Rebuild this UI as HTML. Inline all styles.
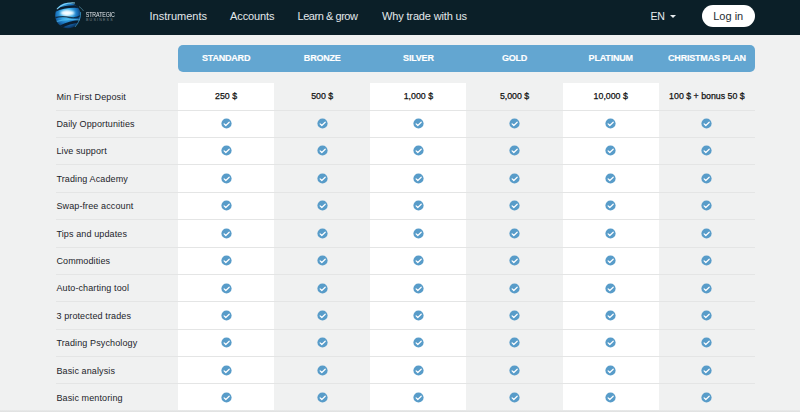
<!DOCTYPE html>
<html><head><meta charset="utf-8"><style>
*{margin:0;padding:0;box-sizing:border-box}
html,body{width:800px;height:412px;overflow:hidden;background:#f0f1f1;font-family:"Liberation Sans",sans-serif}
.a{position:absolute}
.hdr{left:0;top:0;width:800px;height:35px;background:#0b1f28}
.nav{top:10px;color:#e3e8eb;font-size:11px;line-height:12px;white-space:nowrap}
.login{left:701.5px;top:5px;width:53.5px;height:22px;border-radius:11px;background:#fff;color:#262e33;font-size:11px;line-height:22px;text-align:center}
.en{left:650.5px;top:10px;color:#e8ecef;font-size:10.6px;letter-spacing:-0.25px;line-height:12px}
.caret{left:669.5px;top:15px;width:0;height:0;border-left:3px solid transparent;border-right:3px solid transparent;border-top:3.5px solid #e8ecef}
.band{left:178px;top:44.5px;width:577px;height:27.0px;background:#63a6d1;border-radius:5px}
.th{top:44.5px;height:27.0px;line-height:27.0px;padding-top:0.6px;color:#fff;font-size:9px;font-weight:bold;letter-spacing:-0.2px;-webkit-text-stroke:0.15px #fff;text-align:center;width:96.167px;white-space:nowrap}
.col{top:82.5px;height:329.5px;width:96.167px;background:#fff}
.row{left:56px;width:699px;height:1px;background:#e4e5e5}
.lbl{left:56.4px;font-size:9px;color:#1c242a;line-height:12px;letter-spacing:0.12px;white-space:nowrap}
.val{font-size:8.8px;color:#111;width:96.167px;text-align:center;line-height:12px;-webkit-text-stroke:0.25px #111;white-space:nowrap}
.chk{width:11px;height:11px}
</style></head><body>
<div class="a hdr"></div>
<svg class="a" style="left:52px;top:0px" width="36" height="34" viewBox="0 0 36 34">
<defs><radialGradient id="g" cx="45%" cy="42%" r="58%"><stop offset="0" stop-color="#bdeeff"/><stop offset="0.35" stop-color="#3fb2ec"/><stop offset="0.7" stop-color="#1a74bf"/><stop offset="1" stop-color="#0a3564"/></radialGradient>
<filter id="bl" x="-50%" y="-50%" width="200%" height="200%"><feGaussianBlur stdDeviation="1.2"/></filter>
<clipPath id="cp"><circle cx="16" cy="15.5" r="12.8"/></clipPath></defs>
<circle cx="16" cy="15.5" r="12.8" fill="url(#g)"/>
<g clip-path="url(#cp)">
<ellipse cx="15.5" cy="13" rx="7" ry="2.6" fill="#ffffff" filter="url(#bl)" opacity="0.95"/>
<g fill="none" stroke="#0a1d30" stroke-linecap="round">
<path d="M2 11 Q14 5 30 7" stroke-width="2.6"/>
<path d="M2 18 Q10 15.5 18 17.5 Q24 19 30 15" stroke-width="1.3" opacity="0.8"/>
<path d="M8 27 Q18 22 31 21" stroke-width="2.6"/>
</g>
<path d="M3 22 Q13 18 28 20" stroke="#5cc8f5" stroke-width="1.2" fill="none" opacity="0.6"/>
</g>
<path d="M5 9 Q12 2 23 3" stroke="#8fe0ff" stroke-width="1.1" fill="none" opacity="0.85"/>
<path d="M27 6.5 Q30 8.5 31.5 11" stroke="#6fb9d8" stroke-width="0.8" fill="none" opacity="0.6"/>
<path d="M28.6 12 Q29 20 23 27" stroke="#4fc0ee" stroke-width="0.9" fill="none" opacity="0.6"/>
</svg>
<div class="a" style="left:85.8px;top:10.9px;font-size:5.3px;line-height:6px;color:#e2e6ea;letter-spacing:-0.1px;transform:scaleY(1.28);transform-origin:0 0">STRATEGIC</div>
<div class="a" style="left:86px;top:18px;font-size:3.6px;line-height:4px;color:#7d868d;letter-spacing:1.2px">BUSINESS</div>
<div class="a nav" style="left:149.5px;letter-spacing:0px">Instruments</div>
<div class="a nav" style="left:230px;letter-spacing:-0.1px">Accounts</div>
<div class="a nav" style="left:297.5px;letter-spacing:-0.45px">Learn &amp; grow</div>
<div class="a nav" style="left:382px;letter-spacing:-0.15px">Why trade with us</div>
<div class="a en">EN</div><div class="a caret"></div>
<div class="a login">Log in</div>
<div class="a band"></div>
<div class="a col" style="left:178.000px"></div>
<div class="a col" style="left:370.333px"></div>
<div class="a col" style="left:562.667px"></div>
<div class="a th" style="left:178.000px">STANDARD</div>
<div class="a th" style="left:274.167px">BRONZE</div>
<div class="a th" style="left:370.333px">SILVER</div>
<div class="a th" style="left:466.500px">GOLD</div>
<div class="a th" style="left:562.667px">PLATINUM</div>
<div class="a th" style="left:658.833px">CHRISTMAS PLAN</div>
<div class="a lbl" style="top:90.54px">Min First Deposit</div>
<div class="a val" style="left:178.000px;top:90.34px">250 $</div>
<div class="a val" style="left:274.167px;top:90.34px">500 $</div>
<div class="a val" style="left:370.333px;top:90.34px">1,000 $</div>
<div class="a val" style="left:466.500px;top:90.34px">5,000 $</div>
<div class="a val" style="left:562.667px;top:90.34px">10,000 $</div>
<div class="a val" style="left:658.833px;top:90.34px">100 $ + bonus 50 $</div>
<div class="a row" style="top:109.60px"></div>
<div class="a lbl" style="top:117.95px">Daily Opportunities</div>
<svg class="a chk" style="left:220.58px;top:117.88px" viewBox="0 0 11 11"><circle cx="5.5" cy="5.5" r="5.1" fill="#589cc9"/><path d="M3.1 5.9 L4.8 7.5 L8.2 4.2" stroke="#fff" stroke-width="1.2" fill="none" stroke-linecap="round" stroke-linejoin="round"/></svg>
<svg class="a chk" style="left:316.75px;top:117.88px" viewBox="0 0 11 11"><circle cx="5.5" cy="5.5" r="5.1" fill="#589cc9"/><path d="M3.1 5.9 L4.8 7.5 L8.2 4.2" stroke="#fff" stroke-width="1.2" fill="none" stroke-linecap="round" stroke-linejoin="round"/></svg>
<svg class="a chk" style="left:412.92px;top:117.88px" viewBox="0 0 11 11"><circle cx="5.5" cy="5.5" r="5.1" fill="#589cc9"/><path d="M3.1 5.9 L4.8 7.5 L8.2 4.2" stroke="#fff" stroke-width="1.2" fill="none" stroke-linecap="round" stroke-linejoin="round"/></svg>
<svg class="a chk" style="left:509.08px;top:117.88px" viewBox="0 0 11 11"><circle cx="5.5" cy="5.5" r="5.1" fill="#589cc9"/><path d="M3.1 5.9 L4.8 7.5 L8.2 4.2" stroke="#fff" stroke-width="1.2" fill="none" stroke-linecap="round" stroke-linejoin="round"/></svg>
<svg class="a chk" style="left:605.25px;top:117.88px" viewBox="0 0 11 11"><circle cx="5.5" cy="5.5" r="5.1" fill="#589cc9"/><path d="M3.1 5.9 L4.8 7.5 L8.2 4.2" stroke="#fff" stroke-width="1.2" fill="none" stroke-linecap="round" stroke-linejoin="round"/></svg>
<svg class="a chk" style="left:701.42px;top:117.88px" viewBox="0 0 11 11"><circle cx="5.5" cy="5.5" r="5.1" fill="#589cc9"/><path d="M3.1 5.9 L4.8 7.5 L8.2 4.2" stroke="#fff" stroke-width="1.2" fill="none" stroke-linecap="round" stroke-linejoin="round"/></svg>
<div class="a row" style="top:136.98px"></div>
<div class="a lbl" style="top:145.37px">Live support</div>
<svg class="a chk" style="left:220.58px;top:145.32px" viewBox="0 0 11 11"><circle cx="5.5" cy="5.5" r="5.1" fill="#589cc9"/><path d="M3.1 5.9 L4.8 7.5 L8.2 4.2" stroke="#fff" stroke-width="1.2" fill="none" stroke-linecap="round" stroke-linejoin="round"/></svg>
<svg class="a chk" style="left:316.75px;top:145.32px" viewBox="0 0 11 11"><circle cx="5.5" cy="5.5" r="5.1" fill="#589cc9"/><path d="M3.1 5.9 L4.8 7.5 L8.2 4.2" stroke="#fff" stroke-width="1.2" fill="none" stroke-linecap="round" stroke-linejoin="round"/></svg>
<svg class="a chk" style="left:412.92px;top:145.32px" viewBox="0 0 11 11"><circle cx="5.5" cy="5.5" r="5.1" fill="#589cc9"/><path d="M3.1 5.9 L4.8 7.5 L8.2 4.2" stroke="#fff" stroke-width="1.2" fill="none" stroke-linecap="round" stroke-linejoin="round"/></svg>
<svg class="a chk" style="left:509.08px;top:145.32px" viewBox="0 0 11 11"><circle cx="5.5" cy="5.5" r="5.1" fill="#589cc9"/><path d="M3.1 5.9 L4.8 7.5 L8.2 4.2" stroke="#fff" stroke-width="1.2" fill="none" stroke-linecap="round" stroke-linejoin="round"/></svg>
<svg class="a chk" style="left:605.25px;top:145.32px" viewBox="0 0 11 11"><circle cx="5.5" cy="5.5" r="5.1" fill="#589cc9"/><path d="M3.1 5.9 L4.8 7.5 L8.2 4.2" stroke="#fff" stroke-width="1.2" fill="none" stroke-linecap="round" stroke-linejoin="round"/></svg>
<svg class="a chk" style="left:701.42px;top:145.32px" viewBox="0 0 11 11"><circle cx="5.5" cy="5.5" r="5.1" fill="#589cc9"/><path d="M3.1 5.9 L4.8 7.5 L8.2 4.2" stroke="#fff" stroke-width="1.2" fill="none" stroke-linecap="round" stroke-linejoin="round"/></svg>
<div class="a row" style="top:164.36px"></div>
<div class="a lbl" style="top:172.78px">Trading Academy</div>
<svg class="a chk" style="left:220.58px;top:172.76px" viewBox="0 0 11 11"><circle cx="5.5" cy="5.5" r="5.1" fill="#589cc9"/><path d="M3.1 5.9 L4.8 7.5 L8.2 4.2" stroke="#fff" stroke-width="1.2" fill="none" stroke-linecap="round" stroke-linejoin="round"/></svg>
<svg class="a chk" style="left:316.75px;top:172.76px" viewBox="0 0 11 11"><circle cx="5.5" cy="5.5" r="5.1" fill="#589cc9"/><path d="M3.1 5.9 L4.8 7.5 L8.2 4.2" stroke="#fff" stroke-width="1.2" fill="none" stroke-linecap="round" stroke-linejoin="round"/></svg>
<svg class="a chk" style="left:412.92px;top:172.76px" viewBox="0 0 11 11"><circle cx="5.5" cy="5.5" r="5.1" fill="#589cc9"/><path d="M3.1 5.9 L4.8 7.5 L8.2 4.2" stroke="#fff" stroke-width="1.2" fill="none" stroke-linecap="round" stroke-linejoin="round"/></svg>
<svg class="a chk" style="left:509.08px;top:172.76px" viewBox="0 0 11 11"><circle cx="5.5" cy="5.5" r="5.1" fill="#589cc9"/><path d="M3.1 5.9 L4.8 7.5 L8.2 4.2" stroke="#fff" stroke-width="1.2" fill="none" stroke-linecap="round" stroke-linejoin="round"/></svg>
<svg class="a chk" style="left:605.25px;top:172.76px" viewBox="0 0 11 11"><circle cx="5.5" cy="5.5" r="5.1" fill="#589cc9"/><path d="M3.1 5.9 L4.8 7.5 L8.2 4.2" stroke="#fff" stroke-width="1.2" fill="none" stroke-linecap="round" stroke-linejoin="round"/></svg>
<svg class="a chk" style="left:701.42px;top:172.76px" viewBox="0 0 11 11"><circle cx="5.5" cy="5.5" r="5.1" fill="#589cc9"/><path d="M3.1 5.9 L4.8 7.5 L8.2 4.2" stroke="#fff" stroke-width="1.2" fill="none" stroke-linecap="round" stroke-linejoin="round"/></svg>
<div class="a row" style="top:191.74px"></div>
<div class="a lbl" style="top:200.20px">Swap-free account</div>
<svg class="a chk" style="left:220.58px;top:200.20px" viewBox="0 0 11 11"><circle cx="5.5" cy="5.5" r="5.1" fill="#589cc9"/><path d="M3.1 5.9 L4.8 7.5 L8.2 4.2" stroke="#fff" stroke-width="1.2" fill="none" stroke-linecap="round" stroke-linejoin="round"/></svg>
<svg class="a chk" style="left:316.75px;top:200.20px" viewBox="0 0 11 11"><circle cx="5.5" cy="5.5" r="5.1" fill="#589cc9"/><path d="M3.1 5.9 L4.8 7.5 L8.2 4.2" stroke="#fff" stroke-width="1.2" fill="none" stroke-linecap="round" stroke-linejoin="round"/></svg>
<svg class="a chk" style="left:412.92px;top:200.20px" viewBox="0 0 11 11"><circle cx="5.5" cy="5.5" r="5.1" fill="#589cc9"/><path d="M3.1 5.9 L4.8 7.5 L8.2 4.2" stroke="#fff" stroke-width="1.2" fill="none" stroke-linecap="round" stroke-linejoin="round"/></svg>
<svg class="a chk" style="left:509.08px;top:200.20px" viewBox="0 0 11 11"><circle cx="5.5" cy="5.5" r="5.1" fill="#589cc9"/><path d="M3.1 5.9 L4.8 7.5 L8.2 4.2" stroke="#fff" stroke-width="1.2" fill="none" stroke-linecap="round" stroke-linejoin="round"/></svg>
<svg class="a chk" style="left:605.25px;top:200.20px" viewBox="0 0 11 11"><circle cx="5.5" cy="5.5" r="5.1" fill="#589cc9"/><path d="M3.1 5.9 L4.8 7.5 L8.2 4.2" stroke="#fff" stroke-width="1.2" fill="none" stroke-linecap="round" stroke-linejoin="round"/></svg>
<svg class="a chk" style="left:701.42px;top:200.20px" viewBox="0 0 11 11"><circle cx="5.5" cy="5.5" r="5.1" fill="#589cc9"/><path d="M3.1 5.9 L4.8 7.5 L8.2 4.2" stroke="#fff" stroke-width="1.2" fill="none" stroke-linecap="round" stroke-linejoin="round"/></svg>
<div class="a row" style="top:219.12px"></div>
<div class="a lbl" style="top:227.62px">Tips and updates</div>
<svg class="a chk" style="left:220.58px;top:227.64px" viewBox="0 0 11 11"><circle cx="5.5" cy="5.5" r="5.1" fill="#589cc9"/><path d="M3.1 5.9 L4.8 7.5 L8.2 4.2" stroke="#fff" stroke-width="1.2" fill="none" stroke-linecap="round" stroke-linejoin="round"/></svg>
<svg class="a chk" style="left:316.75px;top:227.64px" viewBox="0 0 11 11"><circle cx="5.5" cy="5.5" r="5.1" fill="#589cc9"/><path d="M3.1 5.9 L4.8 7.5 L8.2 4.2" stroke="#fff" stroke-width="1.2" fill="none" stroke-linecap="round" stroke-linejoin="round"/></svg>
<svg class="a chk" style="left:412.92px;top:227.64px" viewBox="0 0 11 11"><circle cx="5.5" cy="5.5" r="5.1" fill="#589cc9"/><path d="M3.1 5.9 L4.8 7.5 L8.2 4.2" stroke="#fff" stroke-width="1.2" fill="none" stroke-linecap="round" stroke-linejoin="round"/></svg>
<svg class="a chk" style="left:509.08px;top:227.64px" viewBox="0 0 11 11"><circle cx="5.5" cy="5.5" r="5.1" fill="#589cc9"/><path d="M3.1 5.9 L4.8 7.5 L8.2 4.2" stroke="#fff" stroke-width="1.2" fill="none" stroke-linecap="round" stroke-linejoin="round"/></svg>
<svg class="a chk" style="left:605.25px;top:227.64px" viewBox="0 0 11 11"><circle cx="5.5" cy="5.5" r="5.1" fill="#589cc9"/><path d="M3.1 5.9 L4.8 7.5 L8.2 4.2" stroke="#fff" stroke-width="1.2" fill="none" stroke-linecap="round" stroke-linejoin="round"/></svg>
<svg class="a chk" style="left:701.42px;top:227.64px" viewBox="0 0 11 11"><circle cx="5.5" cy="5.5" r="5.1" fill="#589cc9"/><path d="M3.1 5.9 L4.8 7.5 L8.2 4.2" stroke="#fff" stroke-width="1.2" fill="none" stroke-linecap="round" stroke-linejoin="round"/></svg>
<div class="a row" style="top:246.50px"></div>
<div class="a lbl" style="top:255.03px">Commodities</div>
<svg class="a chk" style="left:220.58px;top:255.08px" viewBox="0 0 11 11"><circle cx="5.5" cy="5.5" r="5.1" fill="#589cc9"/><path d="M3.1 5.9 L4.8 7.5 L8.2 4.2" stroke="#fff" stroke-width="1.2" fill="none" stroke-linecap="round" stroke-linejoin="round"/></svg>
<svg class="a chk" style="left:316.75px;top:255.08px" viewBox="0 0 11 11"><circle cx="5.5" cy="5.5" r="5.1" fill="#589cc9"/><path d="M3.1 5.9 L4.8 7.5 L8.2 4.2" stroke="#fff" stroke-width="1.2" fill="none" stroke-linecap="round" stroke-linejoin="round"/></svg>
<svg class="a chk" style="left:412.92px;top:255.08px" viewBox="0 0 11 11"><circle cx="5.5" cy="5.5" r="5.1" fill="#589cc9"/><path d="M3.1 5.9 L4.8 7.5 L8.2 4.2" stroke="#fff" stroke-width="1.2" fill="none" stroke-linecap="round" stroke-linejoin="round"/></svg>
<svg class="a chk" style="left:509.08px;top:255.08px" viewBox="0 0 11 11"><circle cx="5.5" cy="5.5" r="5.1" fill="#589cc9"/><path d="M3.1 5.9 L4.8 7.5 L8.2 4.2" stroke="#fff" stroke-width="1.2" fill="none" stroke-linecap="round" stroke-linejoin="round"/></svg>
<svg class="a chk" style="left:605.25px;top:255.08px" viewBox="0 0 11 11"><circle cx="5.5" cy="5.5" r="5.1" fill="#589cc9"/><path d="M3.1 5.9 L4.8 7.5 L8.2 4.2" stroke="#fff" stroke-width="1.2" fill="none" stroke-linecap="round" stroke-linejoin="round"/></svg>
<svg class="a chk" style="left:701.42px;top:255.08px" viewBox="0 0 11 11"><circle cx="5.5" cy="5.5" r="5.1" fill="#589cc9"/><path d="M3.1 5.9 L4.8 7.5 L8.2 4.2" stroke="#fff" stroke-width="1.2" fill="none" stroke-linecap="round" stroke-linejoin="round"/></svg>
<div class="a row" style="top:273.88px"></div>
<div class="a lbl" style="top:282.44px">Auto-charting tool</div>
<svg class="a chk" style="left:220.58px;top:282.52px" viewBox="0 0 11 11"><circle cx="5.5" cy="5.5" r="5.1" fill="#589cc9"/><path d="M3.1 5.9 L4.8 7.5 L8.2 4.2" stroke="#fff" stroke-width="1.2" fill="none" stroke-linecap="round" stroke-linejoin="round"/></svg>
<svg class="a chk" style="left:316.75px;top:282.52px" viewBox="0 0 11 11"><circle cx="5.5" cy="5.5" r="5.1" fill="#589cc9"/><path d="M3.1 5.9 L4.8 7.5 L8.2 4.2" stroke="#fff" stroke-width="1.2" fill="none" stroke-linecap="round" stroke-linejoin="round"/></svg>
<svg class="a chk" style="left:412.92px;top:282.52px" viewBox="0 0 11 11"><circle cx="5.5" cy="5.5" r="5.1" fill="#589cc9"/><path d="M3.1 5.9 L4.8 7.5 L8.2 4.2" stroke="#fff" stroke-width="1.2" fill="none" stroke-linecap="round" stroke-linejoin="round"/></svg>
<svg class="a chk" style="left:509.08px;top:282.52px" viewBox="0 0 11 11"><circle cx="5.5" cy="5.5" r="5.1" fill="#589cc9"/><path d="M3.1 5.9 L4.8 7.5 L8.2 4.2" stroke="#fff" stroke-width="1.2" fill="none" stroke-linecap="round" stroke-linejoin="round"/></svg>
<svg class="a chk" style="left:605.25px;top:282.52px" viewBox="0 0 11 11"><circle cx="5.5" cy="5.5" r="5.1" fill="#589cc9"/><path d="M3.1 5.9 L4.8 7.5 L8.2 4.2" stroke="#fff" stroke-width="1.2" fill="none" stroke-linecap="round" stroke-linejoin="round"/></svg>
<svg class="a chk" style="left:701.42px;top:282.52px" viewBox="0 0 11 11"><circle cx="5.5" cy="5.5" r="5.1" fill="#589cc9"/><path d="M3.1 5.9 L4.8 7.5 L8.2 4.2" stroke="#fff" stroke-width="1.2" fill="none" stroke-linecap="round" stroke-linejoin="round"/></svg>
<div class="a row" style="top:301.26px"></div>
<div class="a lbl" style="top:309.86px">3 protected trades</div>
<svg class="a chk" style="left:220.58px;top:309.96px" viewBox="0 0 11 11"><circle cx="5.5" cy="5.5" r="5.1" fill="#589cc9"/><path d="M3.1 5.9 L4.8 7.5 L8.2 4.2" stroke="#fff" stroke-width="1.2" fill="none" stroke-linecap="round" stroke-linejoin="round"/></svg>
<svg class="a chk" style="left:316.75px;top:309.96px" viewBox="0 0 11 11"><circle cx="5.5" cy="5.5" r="5.1" fill="#589cc9"/><path d="M3.1 5.9 L4.8 7.5 L8.2 4.2" stroke="#fff" stroke-width="1.2" fill="none" stroke-linecap="round" stroke-linejoin="round"/></svg>
<svg class="a chk" style="left:412.92px;top:309.96px" viewBox="0 0 11 11"><circle cx="5.5" cy="5.5" r="5.1" fill="#589cc9"/><path d="M3.1 5.9 L4.8 7.5 L8.2 4.2" stroke="#fff" stroke-width="1.2" fill="none" stroke-linecap="round" stroke-linejoin="round"/></svg>
<svg class="a chk" style="left:509.08px;top:309.96px" viewBox="0 0 11 11"><circle cx="5.5" cy="5.5" r="5.1" fill="#589cc9"/><path d="M3.1 5.9 L4.8 7.5 L8.2 4.2" stroke="#fff" stroke-width="1.2" fill="none" stroke-linecap="round" stroke-linejoin="round"/></svg>
<svg class="a chk" style="left:605.25px;top:309.96px" viewBox="0 0 11 11"><circle cx="5.5" cy="5.5" r="5.1" fill="#589cc9"/><path d="M3.1 5.9 L4.8 7.5 L8.2 4.2" stroke="#fff" stroke-width="1.2" fill="none" stroke-linecap="round" stroke-linejoin="round"/></svg>
<svg class="a chk" style="left:701.42px;top:309.96px" viewBox="0 0 11 11"><circle cx="5.5" cy="5.5" r="5.1" fill="#589cc9"/><path d="M3.1 5.9 L4.8 7.5 L8.2 4.2" stroke="#fff" stroke-width="1.2" fill="none" stroke-linecap="round" stroke-linejoin="round"/></svg>
<div class="a row" style="top:328.64px"></div>
<div class="a lbl" style="top:337.27px">Trading Psychology</div>
<svg class="a chk" style="left:220.58px;top:337.40px" viewBox="0 0 11 11"><circle cx="5.5" cy="5.5" r="5.1" fill="#589cc9"/><path d="M3.1 5.9 L4.8 7.5 L8.2 4.2" stroke="#fff" stroke-width="1.2" fill="none" stroke-linecap="round" stroke-linejoin="round"/></svg>
<svg class="a chk" style="left:316.75px;top:337.40px" viewBox="0 0 11 11"><circle cx="5.5" cy="5.5" r="5.1" fill="#589cc9"/><path d="M3.1 5.9 L4.8 7.5 L8.2 4.2" stroke="#fff" stroke-width="1.2" fill="none" stroke-linecap="round" stroke-linejoin="round"/></svg>
<svg class="a chk" style="left:412.92px;top:337.40px" viewBox="0 0 11 11"><circle cx="5.5" cy="5.5" r="5.1" fill="#589cc9"/><path d="M3.1 5.9 L4.8 7.5 L8.2 4.2" stroke="#fff" stroke-width="1.2" fill="none" stroke-linecap="round" stroke-linejoin="round"/></svg>
<svg class="a chk" style="left:509.08px;top:337.40px" viewBox="0 0 11 11"><circle cx="5.5" cy="5.5" r="5.1" fill="#589cc9"/><path d="M3.1 5.9 L4.8 7.5 L8.2 4.2" stroke="#fff" stroke-width="1.2" fill="none" stroke-linecap="round" stroke-linejoin="round"/></svg>
<svg class="a chk" style="left:605.25px;top:337.40px" viewBox="0 0 11 11"><circle cx="5.5" cy="5.5" r="5.1" fill="#589cc9"/><path d="M3.1 5.9 L4.8 7.5 L8.2 4.2" stroke="#fff" stroke-width="1.2" fill="none" stroke-linecap="round" stroke-linejoin="round"/></svg>
<svg class="a chk" style="left:701.42px;top:337.40px" viewBox="0 0 11 11"><circle cx="5.5" cy="5.5" r="5.1" fill="#589cc9"/><path d="M3.1 5.9 L4.8 7.5 L8.2 4.2" stroke="#fff" stroke-width="1.2" fill="none" stroke-linecap="round" stroke-linejoin="round"/></svg>
<div class="a row" style="top:356.02px"></div>
<div class="a lbl" style="top:364.69px">Basic analysis</div>
<svg class="a chk" style="left:220.58px;top:364.84px" viewBox="0 0 11 11"><circle cx="5.5" cy="5.5" r="5.1" fill="#589cc9"/><path d="M3.1 5.9 L4.8 7.5 L8.2 4.2" stroke="#fff" stroke-width="1.2" fill="none" stroke-linecap="round" stroke-linejoin="round"/></svg>
<svg class="a chk" style="left:316.75px;top:364.84px" viewBox="0 0 11 11"><circle cx="5.5" cy="5.5" r="5.1" fill="#589cc9"/><path d="M3.1 5.9 L4.8 7.5 L8.2 4.2" stroke="#fff" stroke-width="1.2" fill="none" stroke-linecap="round" stroke-linejoin="round"/></svg>
<svg class="a chk" style="left:412.92px;top:364.84px" viewBox="0 0 11 11"><circle cx="5.5" cy="5.5" r="5.1" fill="#589cc9"/><path d="M3.1 5.9 L4.8 7.5 L8.2 4.2" stroke="#fff" stroke-width="1.2" fill="none" stroke-linecap="round" stroke-linejoin="round"/></svg>
<svg class="a chk" style="left:509.08px;top:364.84px" viewBox="0 0 11 11"><circle cx="5.5" cy="5.5" r="5.1" fill="#589cc9"/><path d="M3.1 5.9 L4.8 7.5 L8.2 4.2" stroke="#fff" stroke-width="1.2" fill="none" stroke-linecap="round" stroke-linejoin="round"/></svg>
<svg class="a chk" style="left:605.25px;top:364.84px" viewBox="0 0 11 11"><circle cx="5.5" cy="5.5" r="5.1" fill="#589cc9"/><path d="M3.1 5.9 L4.8 7.5 L8.2 4.2" stroke="#fff" stroke-width="1.2" fill="none" stroke-linecap="round" stroke-linejoin="round"/></svg>
<svg class="a chk" style="left:701.42px;top:364.84px" viewBox="0 0 11 11"><circle cx="5.5" cy="5.5" r="5.1" fill="#589cc9"/><path d="M3.1 5.9 L4.8 7.5 L8.2 4.2" stroke="#fff" stroke-width="1.2" fill="none" stroke-linecap="round" stroke-linejoin="round"/></svg>
<div class="a row" style="top:383.40px"></div>
<div class="a lbl" style="top:392.11px">Basic mentoring</div>
<svg class="a chk" style="left:220.58px;top:392.28px" viewBox="0 0 11 11"><circle cx="5.5" cy="5.5" r="5.1" fill="#589cc9"/><path d="M3.1 5.9 L4.8 7.5 L8.2 4.2" stroke="#fff" stroke-width="1.2" fill="none" stroke-linecap="round" stroke-linejoin="round"/></svg>
<svg class="a chk" style="left:316.75px;top:392.28px" viewBox="0 0 11 11"><circle cx="5.5" cy="5.5" r="5.1" fill="#589cc9"/><path d="M3.1 5.9 L4.8 7.5 L8.2 4.2" stroke="#fff" stroke-width="1.2" fill="none" stroke-linecap="round" stroke-linejoin="round"/></svg>
<svg class="a chk" style="left:412.92px;top:392.28px" viewBox="0 0 11 11"><circle cx="5.5" cy="5.5" r="5.1" fill="#589cc9"/><path d="M3.1 5.9 L4.8 7.5 L8.2 4.2" stroke="#fff" stroke-width="1.2" fill="none" stroke-linecap="round" stroke-linejoin="round"/></svg>
<svg class="a chk" style="left:509.08px;top:392.28px" viewBox="0 0 11 11"><circle cx="5.5" cy="5.5" r="5.1" fill="#589cc9"/><path d="M3.1 5.9 L4.8 7.5 L8.2 4.2" stroke="#fff" stroke-width="1.2" fill="none" stroke-linecap="round" stroke-linejoin="round"/></svg>
<svg class="a chk" style="left:605.25px;top:392.28px" viewBox="0 0 11 11"><circle cx="5.5" cy="5.5" r="5.1" fill="#589cc9"/><path d="M3.1 5.9 L4.8 7.5 L8.2 4.2" stroke="#fff" stroke-width="1.2" fill="none" stroke-linecap="round" stroke-linejoin="round"/></svg>
<svg class="a chk" style="left:701.42px;top:392.28px" viewBox="0 0 11 11"><circle cx="5.5" cy="5.5" r="5.1" fill="#589cc9"/><path d="M3.1 5.9 L4.8 7.5 L8.2 4.2" stroke="#fff" stroke-width="1.2" fill="none" stroke-linecap="round" stroke-linejoin="round"/></svg>
<div class="a" style="left:0;top:410px;width:800px;height:2px;background:linear-gradient(#e9eaea,#dfe0e0)"></div>
</body></html>
